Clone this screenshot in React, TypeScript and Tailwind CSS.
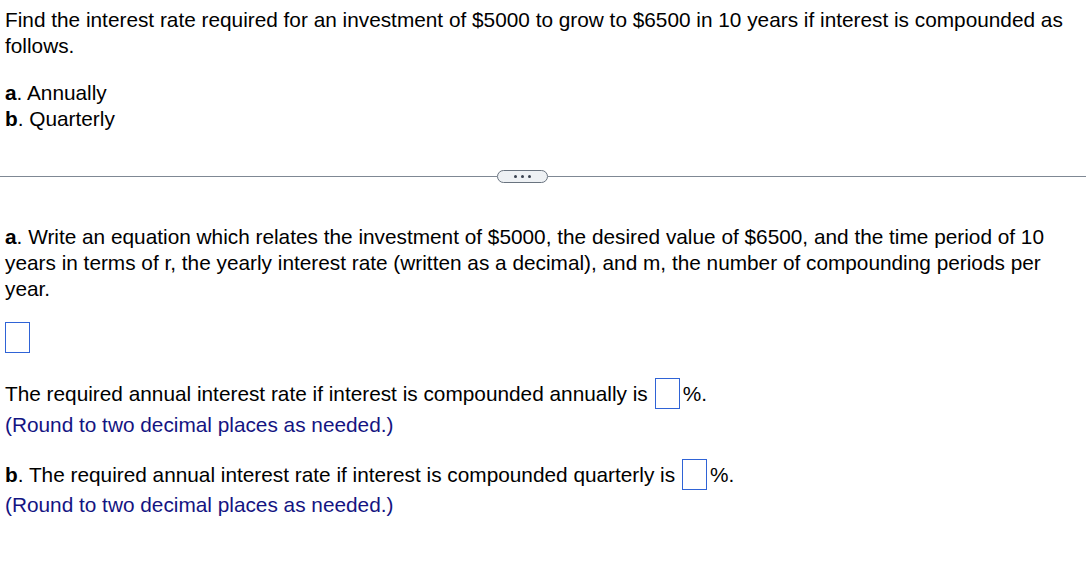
const AnswerBox = ({ className = "" }: { className?: string }) => (
  <span className={`inline-block shrink-0 border border-[#2f63d6] bg-white ${className}`} />
);

const Divider = () => (
  <div className="flex items-center h-[13px] mt-[38px]">
    <div className="w-[497px] h-px bg-[#7f8894]" />
    <button className="flex items-center justify-center gap-[4px] w-[51px] h-[13px] rounded-full border border-[#69737f] bg-[#eef1f4]">
      <span className="w-[3px] h-[3px] rounded-full bg-[#3a4250]" />
      <span className="w-[3px] h-[3px] rounded-full bg-[#3a4250]" />
      <span className="w-[3px] h-[3px] rounded-full bg-[#3a4250]" />
    </button>
    <div className="flex-1 h-px bg-[#7f8894]" />
  </div>
);

export default function App() {
  return (
    <div
      className="w-[1086px] h-[566px] bg-white text-black text-[20.8px] leading-[26px] overflow-hidden"
      style={{ fontFamily: '"Liberation Sans", Arial, sans-serif' }}
    >
      {/* Problem statement */}
      <div className="px-[5px] pt-[7px]">
        <p>
          Find the interest rate required for an investment of $5000 to grow to $6500 in 10 years if interest is compounded as
          follows.
        </p>
        <div className="mt-[21px]">
          <div>
            <b>a</b>. Annually
          </div>
          <div>
            <b>b</b>. Quarterly
          </div>
        </div>
      </div>

      <Divider />

      {/* Part a */}
      <div className="px-[5px] mt-[41px]">
        <p>
          <b>a</b>. Write an equation which relates the investment of $5000, the desired value of $6500, and the time period of 10
          years in terms of r, the yearly interest rate (written as a decimal), and m, the number of compounding periods per
          year.
        </p>
        <div className="mt-[20px] h-[31px]">
          <AnswerBox className="w-[25px] h-[31px]" />
        </div>

        <div className="flex items-center h-[31px] mt-[25px]">
          <span>The required annual interest rate if interest is compounded annually is</span>
          <AnswerBox className="w-[25px] h-[31px] ml-[7px] mr-[3px]" />
          <span>%.</span>
        </div>
        <p className="text-[#141482] mt-[3px]">(Round to two decimal places as needed.)</p>

        <div className="flex items-center h-[31px] mt-[21px]">
          <span>
            <b>b</b>. The required annual interest rate if interest is compounded quarterly is
          </span>
          <AnswerBox className="w-[25px] h-[31px] ml-[7px] mr-[3px]" />
          <span>%.</span>
        </div>
        <p className="text-[#141482] mt-[2px]">(Round to two decimal places as needed.)</p>
      </div>
    </div>
  );
}
